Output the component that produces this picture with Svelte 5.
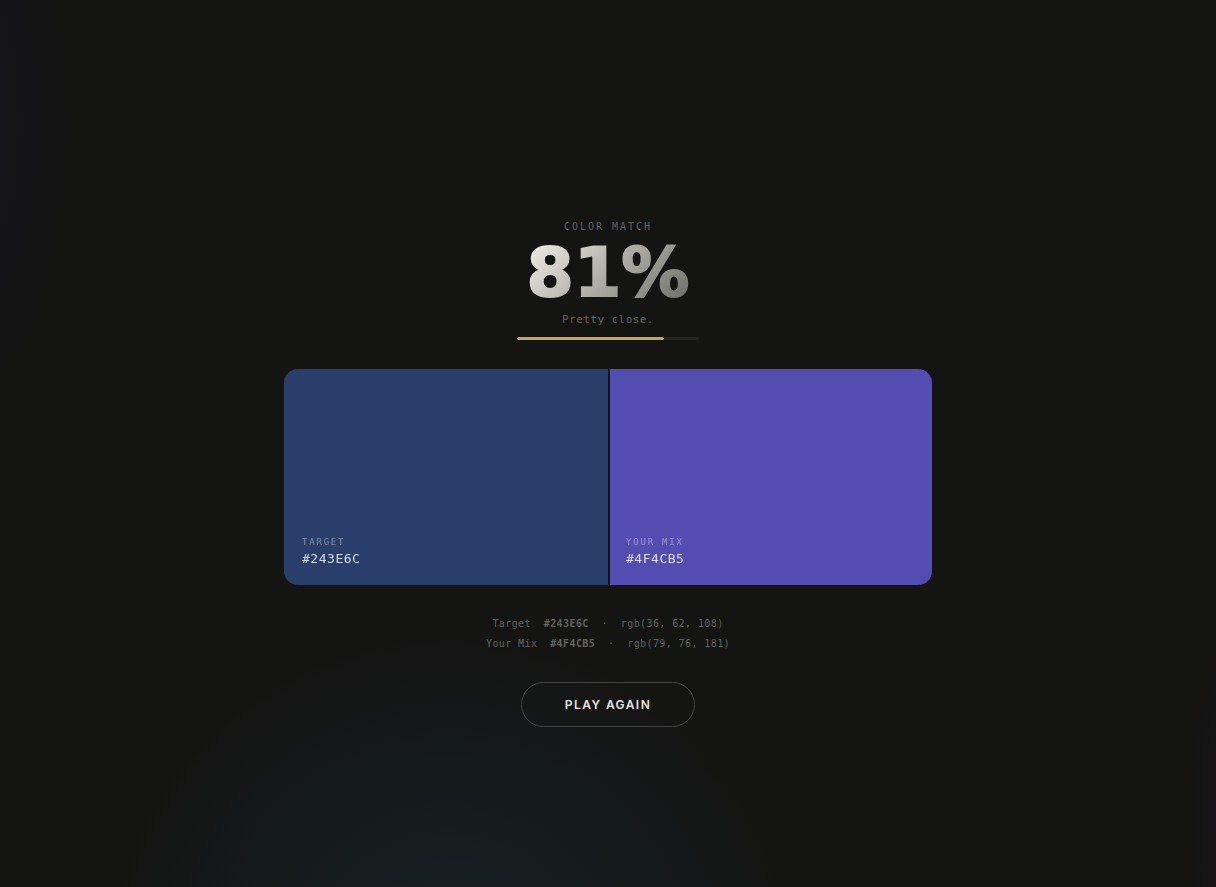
<script>
  let target = { name: "Target", label: "Target", rgb: [36, 62, 108] };
  let mix = { name: "Your Mix", label: "Your mix", rgb: [79, 76, 181] };
  let swatches = [target, mix];
  let score = 81;

  const toHex = rgb =>
    "#" + rgb.map(c => c.toString(16).padStart(2, "0")).join("").toUpperCase();

  function verdict(value) {
    if (value >= 95) return "Perfect.";
    if (value >= 75) return "Pretty close.";
    return "Keep mixing.";
  }

  function playAgain() {
    score = 81;
  }
</script>

<style>
  :global(body) {
    margin: 0;
    background: #141412;
  }

  main {
    min-height: 100vh;
    box-sizing: border-box;
    padding: 60px 24px 0;
    display: flex;
    flex-direction: column;
    align-items: center;
    justify-content: center;
    font-family: "DejaVu Sans Mono", monospace;
    color: #62625f;
    background:
      radial-gradient(circle 360px at 37% 110%, rgba(24, 46, 56, 0.55), transparent),
      radial-gradient(ellipse 130px 330px at -3% 14%, rgba(22, 22, 36, 0.5), transparent),
      radial-gradient(ellipse 90px 240px at 103% 92%, rgba(28, 20, 32, 0.5), transparent),
      #141412;
  }

  .result {
    display: flex;
    flex-direction: column;
    align-items: center;
  }

  .caption {
    margin: 0;
    font-size: 10px;
    line-height: 12px;
    letter-spacing: 0.2em;
    text-transform: uppercase;
    font-weight: normal;
  }

  .score {
    font-family: "DejaVu Sans", sans-serif;
    font-weight: bold;
    font-size: 68px;
    line-height: 80px;
    color: transparent;
    -webkit-text-stroke: 2px transparent;
    background: linear-gradient(135deg, #e8e6df 10%, #666662 100%);
    -webkit-background-clip: text;
    background-clip: text;
  }

  .verdict {
    margin: 0;
    font-size: 11px;
    line-height: 14px;
    letter-spacing: 0.04em;
  }

  .bar {
    width: 182px;
    height: 3px;
    margin: 10px 0 29px;
    border-radius: 2px;
    background: #232321;
    overflow: hidden;
  }

  .fill {
    height: 100%;
    border-radius: 2px;
    background: #c8a84e;
  }

  .swatches {
    width: 100%;
    max-width: 648px;
    display: flex;
    border-radius: 14px;
    overflow: hidden;
  }

  .swatch {
    flex: 1;
    min-height: 216px;
    box-sizing: border-box;
    padding: 18px;
    display: flex;
    flex-direction: column;
    justify-content: flex-end;
    color: #fff;
  }

  .swatch + .swatch {
    border-left: 2px solid #141412;
    padding-left: 16px;
  }

  .swatch span {
    font-size: 9px;
    line-height: 12px;
    letter-spacing: 0.2em;
    text-transform: uppercase;
    opacity: 0.4;
  }

  .swatch strong {
    margin-top: 3px;
    font-size: 13px;
    line-height: 16px;
    letter-spacing: 0.04em;
    font-weight: normal;
    opacity: 0.8;
  }

  .details {
    margin: 29px 0 28px;
    font-size: 10px;
    line-height: 20px;
    letter-spacing: 0.04em;
    text-align: center;
  }

  .details p {
    margin: 0;
    white-space: pre;
  }

  button {
    padding: 14px 43px;
    border: 1px solid #444442;
    border-radius: 999px;
    background: transparent;
    color: #e8e6df;
    font-family: Inter, sans-serif;
    font-size: 12px;
    font-weight: 600;
    line-height: 15px;
    letter-spacing: 0.12em;
    text-transform: uppercase;
    cursor: pointer;
  }

  button:hover {
    border-color: #e8e6df;
  }
</style>

<main>
  <div class="result">
    <h1 class="caption">Color match</h1>
    <div class="score">{score}%</div>
    <p class="verdict">{verdict(score)}</p>
    <div class="bar">
      <div class="fill" style="width: {score}%"></div>
    </div>
  </div>

  <div class="swatches">
    {#each swatches as { label, rgb }}
      <div
        class="swatch"
        style="background: color-mix(in srgb, rgb({rgb.join(', ')}) 97%, #d04030)">
        <span>{label}</span>
        <strong>{toHex(rgb)}</strong>
      </div>
    {/each}
  </div>

  <div class="details">
    {#each swatches as { name, rgb }}
      <p>{name}{"  "}<b>{toHex(rgb)}</b>{"  ·  "}rgb({rgb.join(", ")})</p>
    {/each}
  </div>

  <button on:click={playAgain}>Play again</button>
</main>
